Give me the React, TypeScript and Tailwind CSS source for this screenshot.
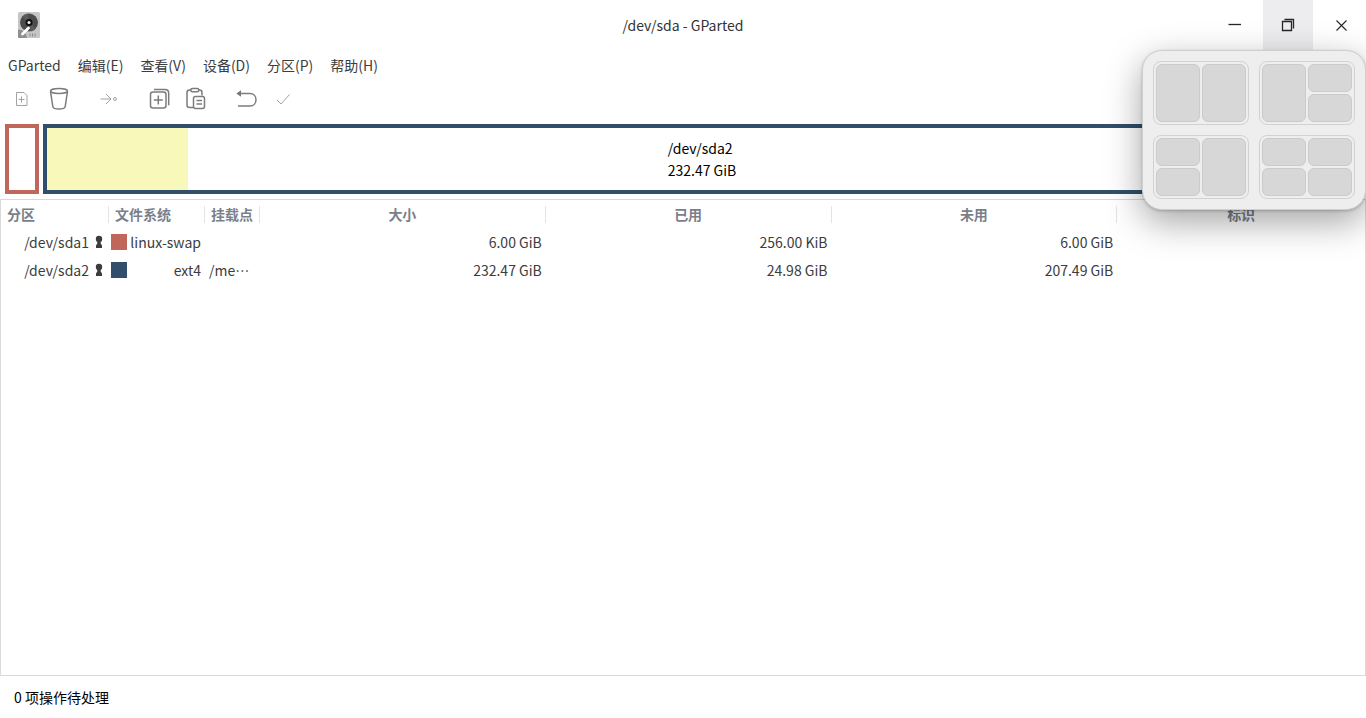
import type { ReactNode } from 'react'

type Partition = {
  name: string
  filesystem: string
  swatchClassName: string
  mountPoint: string
  size: string
  used: string
  unused: string
}

const MENUS = ['GParted', '编辑(E)', '查看(V)', '设备(D)', '分区(P)', '帮助(H)']

const COLUMNS = [
  { label: '分区', className: 'w-[108px]', align: 'text-left' },
  { label: '文件系统', className: 'w-[96px]', align: 'text-left' },
  { label: '挂载点', className: 'w-[55px]', align: 'text-left' },
  { label: '大小', className: 'w-[20.95%]', align: 'text-center' },
  { label: '已用', className: 'w-[20.95%]', align: 'text-center' },
  { label: '未用', className: 'w-[20.95%]', align: 'text-center' },
  { label: '标识', className: '', align: 'text-center' },
]

const PARTITIONS: Partition[] = [
  {
    name: '/dev/sda1',
    filesystem: 'linux-swap',
    swatchClassName: 'bg-[#c1665a]',
    mountPoint: '',
    size: '6.00 GiB',
    used: '256.00 KiB',
    unused: '6.00 GiB',
  },
  {
    name: '/dev/sda2',
    filesystem: 'ext4',
    swatchClassName: 'bg-[#314e6c]',
    mountPoint: '/me…',
    size: '232.47 GiB',
    used: '24.98 GiB',
    unused: '207.49 GiB',
  },
]

// Each layout is a list of columns, each column a number of stacked tiles
const SNAP_LAYOUTS = [
  { label: '左右分屏', columns: [1, 1] },
  { label: '右侧上下分屏', columns: [1, 2] },
  { label: '左侧上下分屏', columns: [2, 1] },
  { label: '四分屏', columns: [2, 2] },
]

export default function App() {
  return (
    <div
      lang="zh-CN"
      className="flex min-h-screen flex-col bg-white font-['Noto_Sans_CJK_SC',sans-serif] text-sm leading-5 text-[#3c3c3c]"
    >
      <TitleBar />
      <MenuBar />
      <Toolbar />
      <DiskMap />
      <PartitionTable />
      <footer className="flex h-[42px] items-center px-3.5 text-black">0 项操作待处理</footer>
    </div>
  )
}

function TitleBar() {
  return (
    <header className="relative grid h-[50px] grid-cols-[1fr_auto_1fr]">
      <div className="flex items-center pl-[17px]">
        <DiskLogo />
      </div>
      <h1 className="self-center text-[#333333]">/dev/sda - GParted</h1>
      <div className="flex justify-end gap-[3px]">
        <WindowButton label="最小化">
          <path d="M9.500 12.500h12.500" />
        </WindowButton>
        <WindowButton label="还原" className="bg-[#ededef]">
          <path d="M10.500 9.500h9v9h-9z" />
          <path d="M12.500 7.500h9v9" />
        </WindowButton>
        <WindowButton label="关闭">
          <path d="M11.500 8.500l10 10M21.500 8.500l-10 10" strokeWidth="1.100" />
        </WindowButton>
      </div>
      <SnapMenu />
    </header>
  )
}

function WindowButton({
  label,
  className = '',
  children,
}: {
  label: string
  className?: string
  children: ReactNode
}) {
  return (
    <button type="button" aria-label={label} className={`flex w-[50px] items-center justify-center ${className}`}>
      <svg width="32" height="26" viewBox="0 0 32 26" fill="none" stroke="#262626" strokeWidth="1.300">
        {children}
      </svg>
    </button>
  )
}

function SnapMenu() {
  return (
    <div className="absolute top-full right-0 z-10 grid grid-cols-2 gap-2.5 rounded-[20px] border border-[#cfcfcf] bg-[#eeeeee] p-2.5 shadow-[0_12px_36px_rgba(0,0,0,0.36),0_1px_3px_rgba(0,0,0,0.2)]">
      {SNAP_LAYOUTS.map((layout) => (
        <button
          key={layout.label}
          type="button"
          aria-label={layout.label}
          className="flex h-16 w-24 gap-0.5 rounded-lg border border-[#d2d2d2] p-0.5"
        >
          {layout.columns.map((count, column) => (
            <span key={column} className="flex h-full flex-1 flex-col gap-0.5">
              {Array.from({ length: count }, (_, tile) => (
                <span key={tile} className="flex-1 rounded-md border border-[#cbcbcb] bg-[#d7d7d7]" />
              ))}
            </span>
          ))}
        </button>
      ))}
    </div>
  )
}

function MenuBar() {
  return (
    <nav className="flex h-8 items-start gap-px pt-[5px]">
      {MENUS.map((menu) => (
        <button key={menu} type="button" className="px-2">
          {menu}
        </button>
      ))}
    </nav>
  )
}

function Toolbar() {
  return (
    <div className="flex h-[34px] items-center gap-px pl-1">
      <ToolButton label="新建" light>
        <path d="M6.500 5.500h7.500l3 3v10h-10.500z" />
        <path d="M11.500 9.500v6M8.500 12.500h6" />
      </ToolButton>
      <ToolButton label="删除">
        <ellipse cx="12" cy="4" rx="8.500" ry="2.500" />
        <path d="M3.500 4.300l2.300 15.200c.5 3.400 11.900 3.400 12.400 0l2.300-15.200" />
      </ToolButton>
      <span className="w-3" />
      <ToolButton label="调整大小/移动" light>
        <path d="M3.500 12h10.500M9 7l5 5-5 5" />
        <circle cx="18" cy="12" r="1.500" />
      </ToolButton>
      <span className="w-3" />
      <ToolButton label="复制">
        <rect x="3.500" y="5" width="15.500" height="16" rx="2.500" />
        <path d="M7 2.500h11c2.700 0 3.700 1 3.700 3.700v12M11.300 8.500v9M6.800 13h9" />
      </ToolButton>
      <ToolButton label="粘贴">
        <path d="M9 20.500H5.500c-1.700 0-2.500-.8-2.500-2.500V5.500C3 3.800 3.800 3 5.500 3H7M15 3h.5c1.700 0 2.500.8 2.500 2.500V8.500" />
        <rect x="6.800" y="1.500" width="8" height="3.200" rx="1.500" />
        <rect x="9.500" y="9.500" width="11" height="12" rx="2" />
        <path d="M12.500 13.500h5.500M12.500 17h5.500" />
      </ToolButton>
      <span className="w-3" />
      <ToolButton label="撤销">
        <path d="M3.500 6.500h12.500c8 0 8 12.500 0 12.500H4" />
        <path d="M7 3.200v6.600l-4.500-3.300z" fill="#757575" stroke="none" />
      </ToolButton>
      <ToolButton label="应用" light>
        <path d="M6 13l4 4L18.500 7.500" />
      </ToolButton>
    </div>
  )
}

function ToolButton({ label, light = false, children }: { label: string; light?: boolean; children: ReactNode }) {
  return (
    <button type="button" aria-label={label} className="flex h-full w-9 items-center justify-center">
      <svg
        width="24"
        height="24"
        viewBox="0 0 24 24"
        fill="none"
        stroke={light ? '#a3a3a3' : '#7c7c7c'}
        strokeWidth={light ? 1 : 1.5}
        strokeLinejoin="round"
      >
        {children}
      </svg>
    </button>
  )
}

function DiskMap() {
  const usedPercent = (24.98 / 232.47) * 100

  return (
    <section className="flex h-[83px] gap-1 px-[5px] pt-2 pb-[5px]">
      <div className="w-[34px] border-4 border-[#c1665a]" />
      <div className="relative flex flex-1 items-center justify-center border-4 border-[#314e6c]">
        <div className="absolute inset-y-0 left-0 bg-[#f8f8ba]" style={{ width: `${usedPercent}%` }} />
        <p className="relative leading-[22px] text-black">
          /dev/sda2
          <br />
          232.47 GiB
        </p>
      </div>
    </section>
  )
}

function PartitionTable() {
  return (
    <main className="flex-1 border border-[#d9d9d9]">
      <table className="w-full table-fixed border-collapse">
        <thead>
          <tr className="h-7 text-[#7b7f8a]">
            {COLUMNS.map((column) => (
              <th key={column.label} className={`p-0 pt-px font-bold ${column.className} ${column.align}`}>
                <div
                  className={`h-[17px] leading-[17px] ${column.align === 'text-left' ? 'pl-1.5' : ''} ${
                    column.className ? 'border-r border-[#e4e4e4]' : ''
                  }`}
                >
                  {column.label}
                </div>
              </th>
            ))}
          </tr>
        </thead>
        <tbody>
          {PARTITIONS.map((partition) => (
            <tr key={partition.name} className="h-7">
              <td className="p-0">
                <div className="flex items-center justify-end gap-1.5 pr-1.5">
                  {partition.name}
                  <Keyhole />
                </div>
              </td>
              <td className="p-0">
                <div className="flex items-center justify-between pr-1 pl-0.5">
                  <span className={`size-4 ${partition.swatchClassName}`} />
                  {partition.filesystem}
                </div>
              </td>
              <td className="p-0 pl-1 whitespace-nowrap">{partition.mountPoint}</td>
              <td className="p-0 pr-1 text-right">{partition.size}</td>
              <td className="p-0 pr-1 text-right">{partition.used}</td>
              <td className="p-0 pr-1 text-right">{partition.unused}</td>
              <td className="p-0" />
            </tr>
          ))}
        </tbody>
      </table>
    </main>
  )
}

function Keyhole() {
  return (
    <svg width="8" height="14" viewBox="0 0 8 14" fill="#3c3c3c" aria-hidden="true">
      <circle cx="4" cy="4" r="3.200" />
      <path d="M2.300 6h3.400v2.500L7 10.500v2.500H1v-2.500L2.300 8.500z" />
    </svg>
  )
}

function DiskLogo() {
  return (
    <svg width="24" height="28" viewBox="0 0 24 28" aria-hidden="true">
      <rect x="1" y="1" width="22" height="26" rx="1.500" fill="#c6c6c6" />
      <path d="M1 19c5-1 8 2 9 8H2.500C1.500 27 1 26.500 1 25.500z" fill="#8f8f8f" />
      <circle cx="12" cy="11.500" r="9" fill="#4c4c4c" />
      <path d="M12 11.500L5 5.500a9 9 0 0 1 6-3zM12 11.500l7 6a9 9 0 0 1-5 3z" fill="#5c5c5c" />
      <circle cx="12" cy="11.500" r="3.500" fill="#111111" />
      <circle cx="12" cy="11.500" r="1.500" fill="#f4f4f4" />
      <path d="M5.500 23L11.500 17" stroke="#ffffff" strokeWidth="2.800" strokeLinecap="round" />
      <path d="M13 22.500v3M15.500 22.500v3M18 22.500v3" stroke="#8a8a8a" />
    </svg>
  )
}
